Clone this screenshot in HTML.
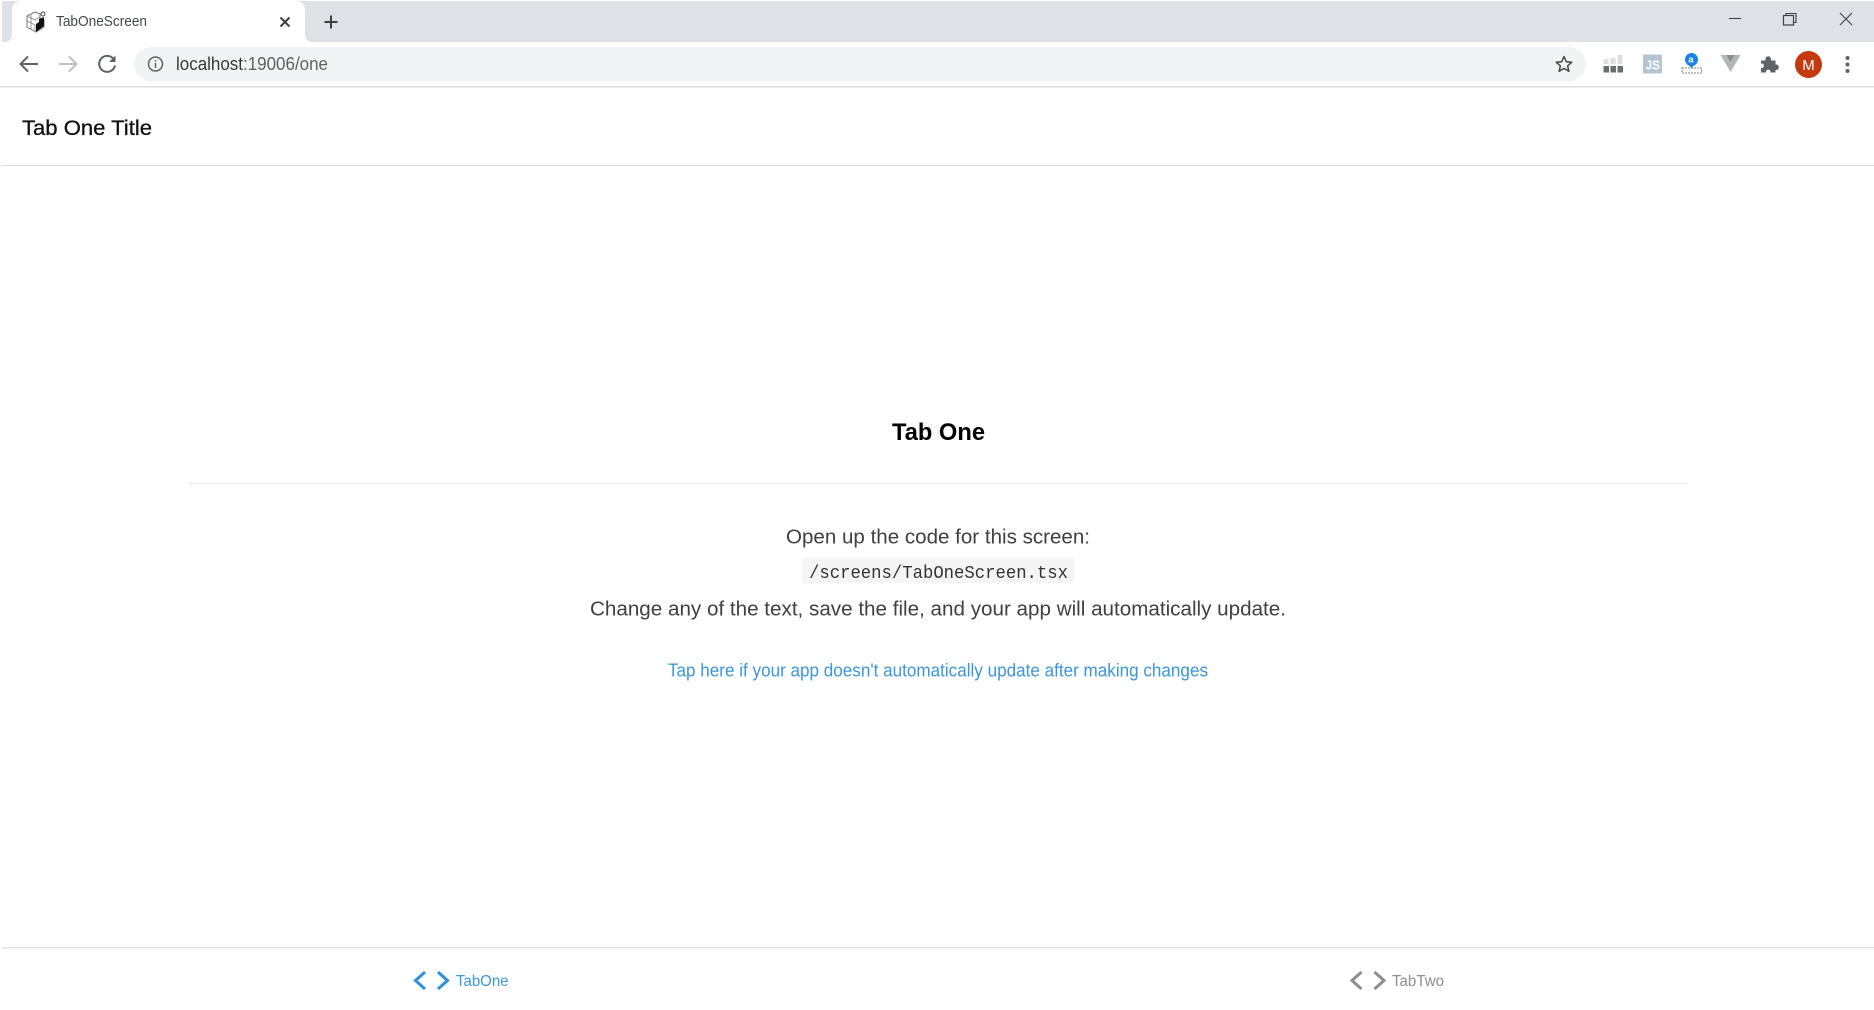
<!DOCTYPE html>
<html lang="en"><head><meta charset="utf-8"><title>TabOneScreen</title>
<style>
html,body{margin:0;padding:0;background:#fff;width:1874px;height:1010px;overflow:hidden}
svg{display:block;position:absolute;left:0;top:0;filter:blur(.35px)}
text{font-family:"Liberation Sans",sans-serif}
</style></head><body>
<svg width="1874" height="1010" viewBox="0 0 1874 1010" xmlns="http://www.w3.org/2000/svg">
<rect width="1874" height="1010" fill="#fff"/>
<!-- tab strip -->
<rect x="2" y="1" width="1872" height="41" fill="#dee1e6"/>
<path d="M4 42Q12 42 12 34V11Q12 1 22 1H295Q305 1 305 11V34Q305 42 313 42Z" fill="#fff"/>
<!-- favicon -->
<g transform="translate(26,11)">
<path d="M1 5L9 1L14 3V10L18 9V16L10 21L1 16Z" fill="#fff" stroke="#777" stroke-width="1"/>
<path d="M1 10L9 14M9 14V21M5 3L5 18M1 5L9 9L14 6" stroke="#888" stroke-width=".8" fill="none"/>
<path d="M10 21V13L13 11V8L18 6V15Z" fill="#111"/>
<circle cx="17" cy="3" r="2" fill="#fff" stroke="#444" stroke-width="1"/>
</g>
<text x="56" y="26" font-size="14.500" fill="#44474a" textLength="91" lengthAdjust="spacingAndGlyphs">TabOneScreen</text>
<path d="M280.500 17.500L289.500 26.500M289.500 17.500L280.500 26.500" stroke="#3c4043" stroke-width="2"/>
<path d="M331 15.500V28.500M324.500 22H337.500" stroke="#3c4043" stroke-width="2"/>
<!-- window controls -->
<path d="M1729 18.500H1741" stroke="#3c4043" stroke-width="1.100"/>
<path d="M1786 15V13.500H1796V22.500H1794" fill="none" stroke="#3c4043" stroke-width="1.100"/>
<rect x="1783.500" y="15.500" width="10" height="9.500" fill="none" stroke="#3c4043" stroke-width="1.200"/>
<path d="M1840 13L1852 25M1852 13L1840 25" stroke="#3c4043" stroke-width="1.100"/>
<!-- toolbar -->
<path d="M38 64H21M28 56.500L20.500 64L28 71.500" fill="none" stroke="#5f6368" stroke-width="2"/>
<path d="M59 64H76M69 56.500L76.500 64L69 71.500" fill="none" stroke="#bcbfc3" stroke-width="2"/>
<path d="M113.500 59A8 8 0 1 0 115 65.500" fill="none" stroke="#5f6368" stroke-width="2"/>
<path d="M115.500 55.500V62H109Z" fill="#5f6368"/>
<rect x="134" y="47" width="1452" height="34" rx="17" fill="#f1f3f4"/>
<circle cx="155.500" cy="64" r="7" fill="none" stroke="#5f6368" stroke-width="1.500"/>
<path d="M155.500 63V68M155.500 60V61.500" stroke="#5f6368" stroke-width="1.500"/>
<text x="176" y="70" font-size="18" fill="#5f6368" textLength="152" lengthAdjust="spacingAndGlyphs"><tspan fill="#36393c">localhost</tspan>:19006/one</text>
<path d="M1564 56.500L1566.300 61.700L1571.800 62.200L1567.600 65.900L1568.900 71.300L1564 68.400L1559.100 71.300L1560.400 65.900L1556.200 62.200L1561.700 61.700Z" fill="none" stroke="#45494c" stroke-width="1.500" stroke-linejoin="round"/>
<rect y="86" width="1874" height="1.500" fill="#dadce0"/>
<!-- extension 1 -->
<g fill="#6a6e72"><rect x="1603.500" y="66" width="5.500" height="6.500"/><rect x="1610.500" y="66" width="5.500" height="6.500"/><rect x="1617.500" y="66" width="5.500" height="6.500"/></g>
<g fill="#dcdedf"><rect x="1603.500" y="59" width="5" height="5"/><rect x="1610.500" y="58" width="5" height="6"/><rect x="1617.500" y="55" width="5" height="9"/></g>
<!-- JS extension -->
<rect x="1643" y="54.500" width="19" height="19" rx="1.500" fill="#b3c5d2"/>
<text x="1645.500" y="69.500" font-size="12.500" font-weight="700" fill="#fff" textLength="14.500" lengthAdjust="spacingAndGlyphs">JS</text>
<!-- a extension -->
<circle cx="1691.500" cy="59.500" r="6.500" fill="#1a84e0"/>
<text x="1688.300" y="62.500" font-size="9.500" font-weight="700" fill="#fff">a</text>
<path d="M1688.500 65H1694.500L1691.500 68Z" fill="#1a84e0"/>
<rect x="1682" y="68" width="19.500" height="5" fill="#fff" stroke="#7c8084" stroke-width="1" stroke-dasharray="2 1"/>
<!-- Vue -->
<path d="M1720.500 55H1740.500L1730.500 72Z" fill="#b4b7b9"/>
<path d="M1726.500 55H1734.500L1730.500 62Z" fill="#8a8e91"/>
<!-- Puzzle -->
<path d="M1761 60.500H1765.500V59A2.700 2.700 0 0 1 1771 59V60.500H1775.500V64.500H1776.500A2.800 2.800 0 0 1 1776.500 70H1775.500V72.500H1770.500V71.500A2.300 2.300 0 0 0 1766 71.500V72.500H1761V68H1762.500A2.500 2.500 0 0 0 1762.500 63.500H1761Z" fill="#5f6368"/>
<!-- Avatar -->
<circle cx="1808.500" cy="64.500" r="13.500" fill="#c5390f"/>
<text x="1808.500" y="70" font-size="15" fill="#fff" text-anchor="middle">M</text>
<g fill="#5f6368"><circle cx="1847.500" cy="58" r="2"/><circle cx="1847.500" cy="64.500" r="2"/><circle cx="1847.500" cy="71" r="2"/></g>
<!-- page header -->
<text x="22" y="135" font-size="21" fill="#111" stroke="#111" stroke-width=".3" textLength="130" lengthAdjust="spacingAndGlyphs">Tab One Title</text>
<rect x="2" y="165" width="1872" height="1" fill="#d8d8d8"/>
<!-- content -->
<text x="892" y="440" font-size="24.500" font-weight="700" fill="#000" textLength="93" lengthAdjust="spacingAndGlyphs">Tab One</text>
<rect x="189" y="483" width="1499" height="1" fill="#e9e9e9"/>
<text x="786" y="543.500" font-size="20.500" fill="#404040" textLength="304" lengthAdjust="spacingAndGlyphs">Open up the code for this screen:</text>
<rect x="802" y="558" width="272" height="25" rx="3" fill="#f5f5f5"/>
<text x="809" y="578" font-size="18" fill="#333" textLength="259" lengthAdjust="spacingAndGlyphs" style="font-family:'Liberation Mono',monospace">/screens/TabOneScreen.tsx</text>
<text x="590" y="615.500" font-size="20.500" fill="#404040" textLength="696" lengthAdjust="spacingAndGlyphs">Change any of the text, save the file, and your app will automatically update.</text>
<text x="668" y="676.500" font-size="18" fill="#3c96dc" textLength="540" lengthAdjust="spacingAndGlyphs">Tap here if your app doesn't automatically update after making changes</text>
<!-- tab bar -->
<rect x="2" y="947" width="1872" height="1.500" fill="#e2e2e2"/>
<path d="M425 972L415.500 980.500L425 989M438 972L447.500 980.500L438 989" fill="none" stroke="#2f8fdf" stroke-width="3"/>
<text x="456" y="986" font-size="15.500" fill="#3c96dc" textLength="52.500" lengthAdjust="spacingAndGlyphs">TabOne</text>
<path d="M1361.500 972L1352 980.500L1361.500 989M1374.500 972L1384 980.500L1374.500 989" fill="none" stroke="#8e8e8f" stroke-width="3"/>
<text x="1392" y="986" font-size="15.500" fill="#8e8e8f" textLength="52" lengthAdjust="spacingAndGlyphs">TabTwo</text>
</svg>
</body></html>
